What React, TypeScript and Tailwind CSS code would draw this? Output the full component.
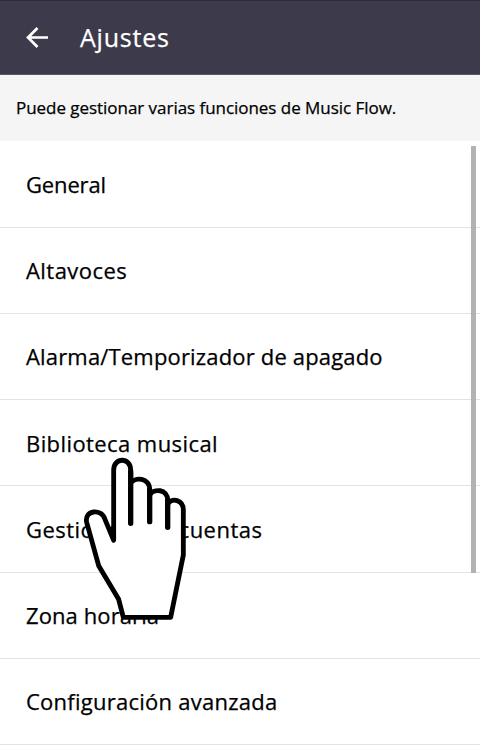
interface SettingsItem {
  label: string
  spacing: string
}

const SETTINGS: SettingsItem[] = [
  { label: 'General',                        spacing: 'tracking-[-0.15px]' },
  { label: 'Altavoces',                      spacing: 'tracking-[0.45px]' },
  { label: 'Alarma/Temporizador de apagado', spacing: 'tracking-[0.17px]' },
  { label: 'Biblioteca musical',             spacing: 'tracking-[0.42px]' },
  { label: 'Gestionar sus cuentas',          spacing: 'tracking-[0.47px]' },
  { label: 'Zona horaria',                   spacing: 'tracking-[0.1px]' },
  { label: 'Configuración avanzada',         spacing: 'tracking-[0.25px]' },
]

function BackArrow() {
  return (
    <svg width="24" height="24" viewBox="0 0 24 24" fill="none" stroke="white" strokeWidth="2.7">
      <path d="M12.5 2 3 11.500l9.500 9.500M3 11.500h20" />
    </svg>
  )
}

function HandPointer() {
  return (
    <svg
      className="absolute top-[445px] left-[70px]"
      width="130"
      height="190"
      viewBox="0 0 390 570"
      fill="none"
      stroke="black"
      strokeWidth="14.5"
      strokeLinecap="round"
      strokeLinejoin="round"
    >
      <path
        fill="white"
        d="M131 286V75C131 36 182 36 182 75V115C195 94 239 98 239 134V150C251 129 293 132 293 165V177C306 156 340 165 340 195V330L302 517H160L146 463L86 362L50 232C42 194 95 191 104 221Z"
      />
      <path strokeWidth="16" d="M182 80V235M239 135V230M293 165V247" />
    </svg>
  )
}

export default function App() {
  return (
    <div className="relative h-[754px] w-[480px] overflow-hidden bg-white font-['Open_Sans','Noto_Sans',sans-serif] text-black [-webkit-text-stroke:0.25px_currentColor]">
      <header className="flex h-[75px] items-center gap-[31px] border-t border-b border-t-[#2e2c3b] border-b-[#59566a] bg-[#3d3a4b] pl-[25px] text-white">
        <BackArrow />
        <h1 className="text-[25px] leading-none tracking-[0.8px]">Ajustes</h1>
      </header>

      <p className="flex h-[66px] items-center bg-[#f5f5f5] pl-4 text-[17px] tracking-[-0.04px]">
        Puede gestionar varias funciones de Music Flow.
      </p>

      <ul className="pt-[0.25px]">
        {SETTINGS.map(({ label, spacing }) => (
          <li key={label} className="flex h-[86.25px] items-center border-b border-[#e3e3e3] pt-px pl-[26px]">
            <span className={`whitespace-nowrap text-[22px] ${spacing}`}>{label}</span>
          </li>
        ))}
      </ul>

      {/* Scrollbar thumb */}
      <div className="absolute top-[146px] left-[471px] h-[427px] w-[5px] bg-[#b2b2b2]" />

      <HandPointer />
    </div>
  )
}
